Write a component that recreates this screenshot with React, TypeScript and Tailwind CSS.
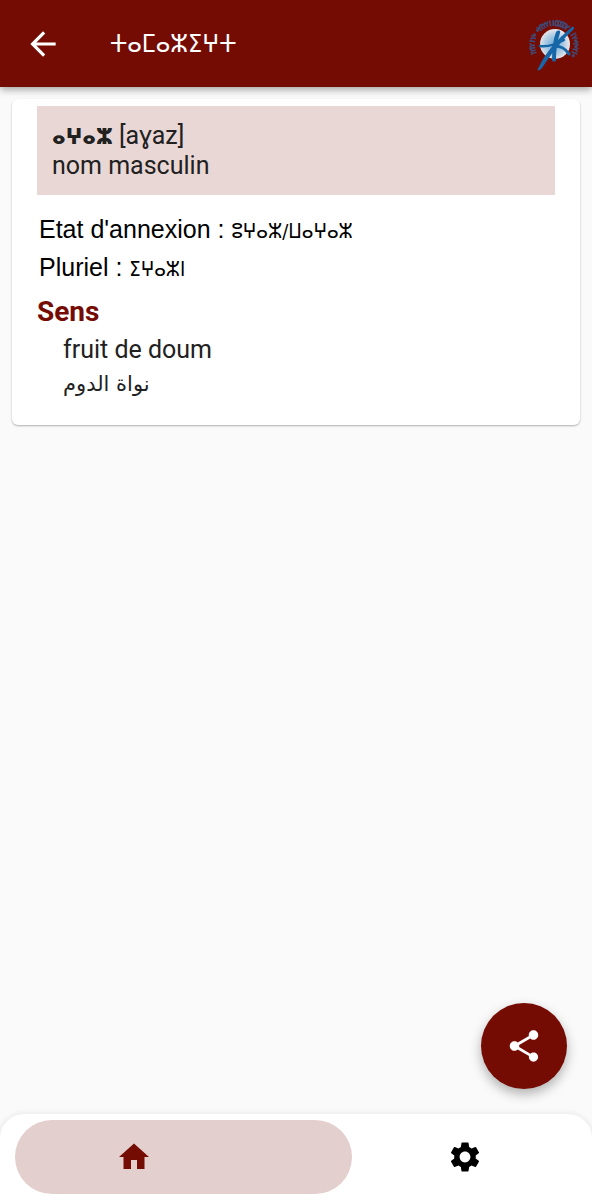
import type { ReactNode } from "react";
import { MdArrowBack, MdHome, MdSettings, MdShare } from "react-icons/md";

const TIFINAGH = "leading-none font-['DejaVu_Sans_Condensed','DejaVu_Sans',sans-serif]";

// Ring marks around the emblem: angle in degrees, clockwise from the top
const RING_MARKS = [
  { angle: -112, kind: "bar" },
  { angle: -105, kind: "hook" },
  { angle: -98, kind: "bar" },
  { angle: -91, kind: "hook" },
  { angle: -80, kind: "bar" },
  { angle: -71, kind: "hook" },
  { angle: -63, kind: "dot" },
  { angle: -48, kind: "dot" },
  { angle: -41, kind: "hook" },
  { angle: -34, kind: "bar" },
  { angle: -27, kind: "hook" },
  { angle: -19, kind: "hook" },
  { angle: -10, kind: "bar" },
  { angle: -2, kind: "bar" },
  { angle: 7, kind: "ring" },
  { angle: 14, kind: "ring" },
  { angle: 21, kind: "ring" },
  { angle: 28, kind: "ring" },
  { angle: 36, kind: "hook" },
  { angle: 61, kind: "bar" },
  { angle: 70, kind: "hook" },
  { angle: 79, kind: "dot" },
  { angle: 86, kind: "hook" },
  { angle: 94, kind: "dot" },
  { angle: 102, kind: "hook" },
  { angle: 111, kind: "bar" },
  { angle: 119, kind: "dot" },
];

const MARK_SHAPES: Record<string, ReactNode> = {
  bar: <path d="M0 -3V3" />,
  hook: <path d="M-2 -2.5L0 0L2 -2.5M0 0V3" />,
  ring: <path d="M-1.5 0a1.5 2.5 0 1 0 3 0a1.5 2.5 0 1 0 -3 0" />,
  dot: <circle r="0.8" />,
};

function Logo() {
  return (
    <svg className="h-14 w-14" viewBox="0 0 56 56" fill="none" aria-hidden="true">
      <defs>
        <radialGradient id="globe" cx="48%" cy="52%" r="54%">
          <stop offset="0" stopColor="#6fa9d6" />
          <stop offset="0.55" stopColor="#a9cae4" />
          <stop offset="1" stopColor="#f1e9eb" />
        </radialGradient>
      </defs>
      <g stroke="#38548b" strokeWidth="1.6" opacity="0.85">
        {RING_MARKS.map((mark) => (
          <g key={mark.angle} transform={`translate(28 29) rotate(${mark.angle}) translate(0 -22)`}>
            {MARK_SHAPES[mark.kind]}
          </g>
        ))}
      </g>
      <circle cx="29" cy="28" r="15" fill="url(#globe)" />
      <g fill="#1767a8">
        <path d="M12 53C18 39 29 25 46 11C48 10 49 12 47 14C34 26 24 40 16 52C14 55 10 55 12 53Z" />
        <path d="M30 16C32 14 35 14 34 17C31 25 30 35 30 44C30 46 26 46 26 44C26 34 27 24 30 16Z" />
      </g>
      <g stroke="#1767a8" strokeLinecap="round">
        <path d="M14 30C23 31 31 28 38 24" strokeWidth="2.5" />
        <path d="M28 30C35 30 39 32 43 38" strokeWidth="3" />
      </g>
    </svg>
  );
}

export default function App() {
  return (
    <div className="relative flex min-h-screen flex-col bg-[#fafafa] font-[Roboto,sans-serif] text-[25px] text-[#212121]">
      <header className="relative flex h-[87px] items-center bg-[#750c03] pr-[10px] pl-6 text-white shadow-[0_2px_8px_rgba(0,0,0,0.4)]">
        <button type="button" aria-label="Retour">
          <MdArrowBack className="size-[38px]" />
        </button>
        <h1 className={`ml-12 flex-1 text-[25px] ${TIFINAGH}`}>ⵜⴰⵎⴰⵣⵉⵖⵜ</h1>
        <Logo />
      </header>

      <main className="flex-1 px-3 pt-3">
        <article className="rounded-md bg-white px-[25px] pt-[7px] pb-6 shadow-[0_1px_2px_rgba(0,0,0,0.3)]">
          <div className="bg-[#e9d7d5] px-[15px] pt-[15px] pb-[14px] leading-[30px]">
            <h2 className="font-normal">
              <b className={`text-[22px] ${TIFINAGH}`}>ⴰⵖⴰⵣ</b> [aɣaz]
            </h2>
            <p>nom masculin</p>
          </div>

          <div className="mt-[15px] px-[2px] font-['Liberation_Sans',sans-serif] leading-[38px] text-black">
            <p>
              Etat d'annexion : <span className={`text-[20px] ${TIFINAGH}`}>ⵓⵖⴰⵣ/ⵡⴰⵖⴰⵣ</span>
            </p>
            <p>
              Pluriel : <span className={`text-[20px] ${TIFINAGH}`}>ⵉⵖⴰⵣⵏ</span>
            </p>
          </div>

          <h3 className="mt-[10px] text-[28px] leading-8 font-bold text-[#750c03]">Sens</h3>
          <div className="mt-[5px] pl-[26px] leading-[34px]">
            <p>fruit de doum</p>
            <p lang="ar" className="w-fit font-['DejaVu_Sans',sans-serif] text-[21px]" dir="rtl">
              نواة الدوم
            </p>
          </div>
        </article>
      </main>

      <button
        type="button"
        aria-label="Partager"
        className="absolute right-[25px] bottom-[111px] flex size-[86px] items-center justify-center rounded-full bg-[#750c03] text-white shadow-[0_5px_12px_rgba(0,0,0,0.3)]"
      >
        <MdShare className="size-[38px]" />
      </button>

      <nav className="flex rounded-t-3xl bg-white px-[15px] py-1.5 shadow-[0_0_6px_rgba(0,0,0,0.1)]">
        <button
          type="button"
          aria-label="Accueil"
          className="flex h-[74px] basis-3/5 items-center justify-center rounded-full bg-[#e3cfcd] pr-[100px] text-[#750c03]"
        >
          <MdHome className="size-9" />
        </button>
        <button type="button" aria-label="Paramètres" className="flex flex-1 items-center justify-center text-black">
          <MdSettings className="size-9" />
        </button>
      </nav>
    </div>
  );
}
